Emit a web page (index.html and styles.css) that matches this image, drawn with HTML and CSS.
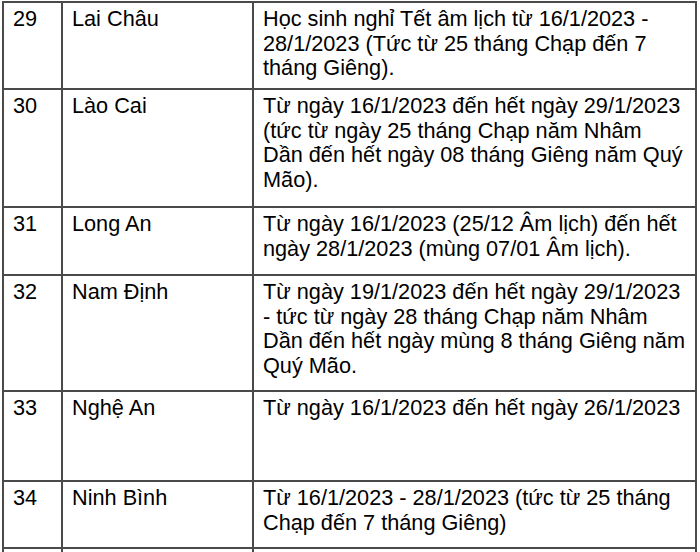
FILE: index.html
```html
<!DOCTYPE html>
<html lang="vi">
<head>
<meta charset="utf-8">
<title>Lịch nghỉ Tết</title>
<link rel="stylesheet" href="styles.css">
</head>
<body>
<div class="crop">
<table class="tbl">
  <colgroup><col class="c1"><col class="c2"><col class="c3"></colgroup>
  <tr class="r29"><td>29</td><td>Lai Châu</td><td>Học sinh nghỉ Tết âm lịch từ 16/1/2023 -<br>28/1/2023 (Tức từ 25 tháng Chạp đến 7<br>tháng Giêng).</td></tr>
  <tr class="r30"><td>30</td><td>Lào Cai</td><td>Từ ngày 16/1/2023 đến hết ngày 29/1/2023<br>(tức từ ngày 25 tháng Chạp năm Nhâm<br>Dần đến hết ngày 08 tháng Giêng năm Quý<br>Mão).</td></tr>
  <tr class="r31"><td>31</td><td>Long An</td><td>Từ ngày 16/1/2023 (25/12 Âm lịch) đến hết<br>ngày 28/1/2023 (mùng 07/01 Âm lịch).</td></tr>
  <tr class="r32"><td>32</td><td>Nam Định</td><td>Từ ngày 19/1/2023 đến hết ngày 29/1/2023<br>- tức từ ngày 28 tháng Chạp năm Nhâm<br>Dần đến hết ngày mùng 8 tháng Giêng năm<br>Quý Mão.</td></tr>
  <tr class="r33"><td>33</td><td>Nghệ An</td><td>Từ ngày 16/1/2023 đến hết ngày 26/1/2023</td></tr>
  <tr class="r34"><td>34</td><td>Ninh Bình</td><td>Từ 16/1/2023 - 28/1/2023 (tức từ 25 tháng<br>Chạp đến 7 tháng Giêng)</td></tr>
  <tr class="r35"><td></td><td></td><td></td></tr>
</table>
</div>
</body>
</html>
```
FILE: styles.css
```css
html, body {
  margin: 0;
  padding: 0;
  background: #ffffff;
}
.crop {
  width: 700px;
  height: 552px;
  overflow: hidden;
}
.tbl {
  border-collapse: collapse;
  table-layout: fixed;
  width: 693px;
  margin: 1px 0 0 2px;
  font-family: "Liberation Sans", Arial, sans-serif;
  font-size: 21.7px;
  line-height: 24.7px;
  color: #000000;
}
.c1 { width: 59px; }
.c2 { width: 191px; }
.c3 { width: 443px; }
.tbl td {
  border: 2px solid #4a4a4a;
  padding: 4px 6px 0 9px;
  vertical-align: top;
  white-space: nowrap;
}
.r29 { height: 87px; }
.r30 { height: 118px; }
.r31 { height: 68px; }
.r32 { height: 116px; }
.r33 { height: 90px; }
.r34 { height: 67px; }
.r35 { height: 40px; }
```
